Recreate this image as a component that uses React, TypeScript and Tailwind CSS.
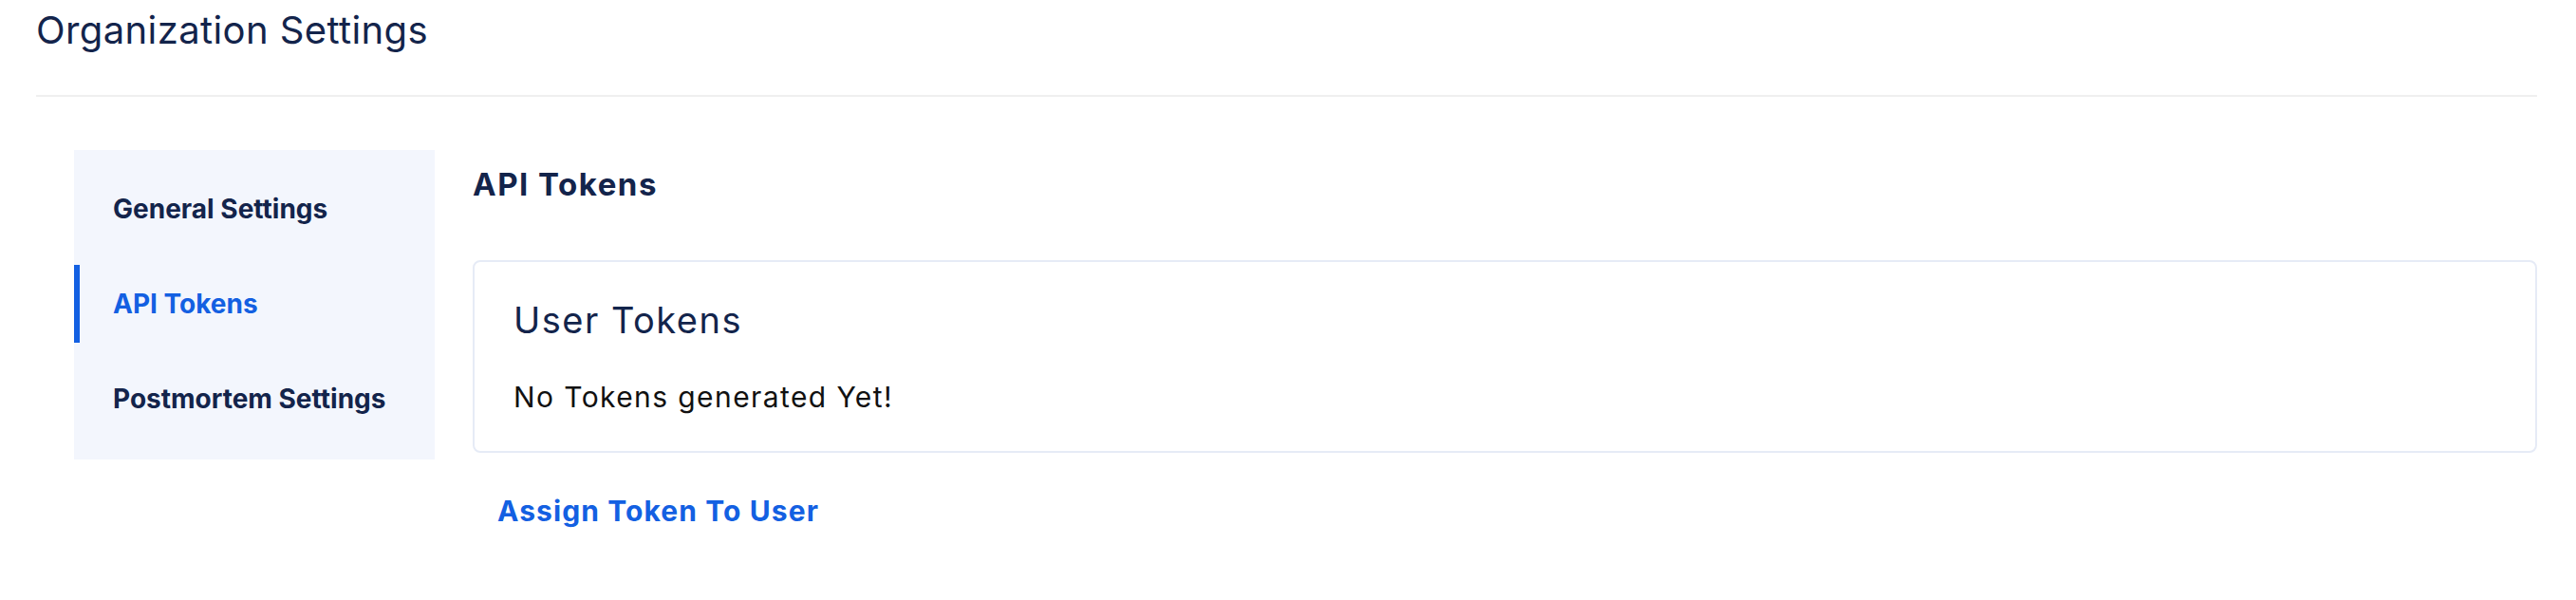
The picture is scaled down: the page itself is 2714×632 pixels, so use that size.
import React from 'react';

const navItems = [
    { label: 'General Settings', active: false },
    { label: 'API Tokens', active: true },
    { label: 'Postmortem Settings', active: false },
];

export default function App() {
    return (
        <div className="min-h-screen bg-white px-[38px] pr-[41px] pt-[8px] font-['Inter',sans-serif] text-[#13244b]">
            <h1 className="text-[40px] leading-[48px] font-normal tracking-[0.4px]">Organization Settings</h1>
            <div className="mt-[44px] h-[2px] bg-[#efefef]" />

            <div className="mt-[56px] flex gap-[40px] pl-[40px]">
                {/* side nav */}
                <nav className="w-[380px] shrink-0 self-start bg-[#f3f6fd] pt-[21px] pb-[23px] flex flex-col gap-[18px]">
                    {navItems.map((item) => (
                        <div
                            key={item.label}
                            className={`h-[82px] flex items-center text-[28px] font-bold ${
                                item.active
                                    ? 'border-l-[6px] border-[#1360e2] pl-[35px] text-[#1360e2]'
                                    : 'pl-[41px] text-[#13244b]'
                            }`}
                        >
                            {item.label}
                        </div>
                    ))}
                </nav>

                {/* content */}
                <div className="flex-1 pt-[16px]">
                    <h2 className="text-[33px] leading-[40px] font-bold tracking-[1.5px]">API Tokens</h2>

                    <div className="mt-[60px] rounded-lg border-2 border-[#e6ebf6] px-[41px] pt-[38px] pb-[39px]">
                        <h3 className="text-[38px] leading-[46px] font-normal tracking-[1.5px]">User Tokens</h3>
                        <p className="mt-[40px] text-[30px] leading-[36px] tracking-[1.4px] text-[#111111]">
                            No Tokens generated Yet!
                        </p>
                    </div>

                    <button className="mt-[43px] ml-[26px] text-[30px] leading-[36px] font-bold tracking-[1.1px] text-[#1360e2]">
                        Assign Token To User
                    </button>
                </div>
            </div>
        </div>
    );
}
